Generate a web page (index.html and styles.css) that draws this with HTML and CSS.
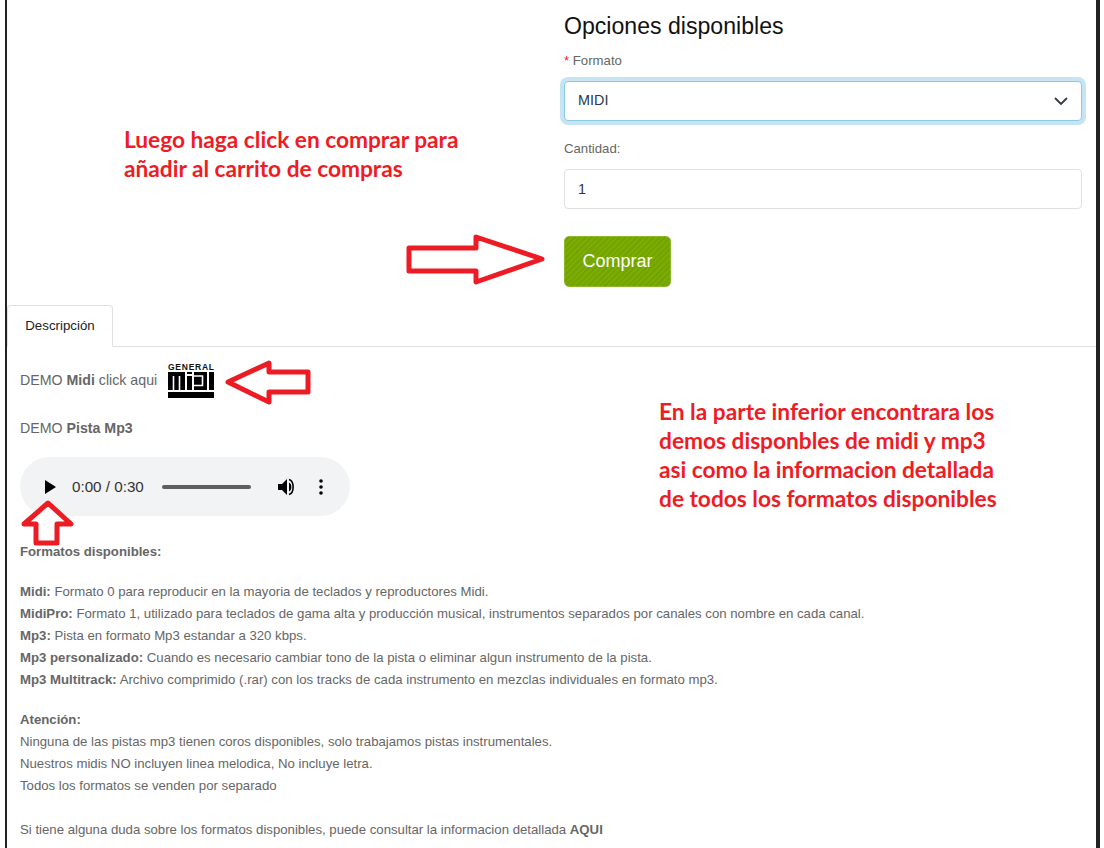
FILE: index.html
```html
<!DOCTYPE html>
<html lang="es">
<head>
    <meta charset="UTF-8">
    <meta name="viewport" content="width=device-width, initial-scale=1.0">
    <title>Opciones disponibles</title>
    <link rel="stylesheet" href="styles.css">
</head>
<body>
    <div class="frame">
        <div class="options">
            <h2>Opciones disponibles</h2>
            <div class="form-group">
                <label for="formato"><span class="required">*</span> Formato</label>
                <div class="select-wrap">
                    <select id="formato">
                        <option>MIDI</option>
                        <option>MidiPro</option>
                        <option>Mp3</option>
                    </select>
                    <svg class="chevron" width="16" height="10" viewBox="0 0 16 10"><path d="M2 2l6 6 6-6" fill="none" stroke="#343a40" stroke-width="1.800"/></svg>
                </div>
            </div>
            <div class="form-group qty">
                <label for="cantidad">Cantidad:</label>
                <input type="text" id="cantidad" value="1">
            </div>
            <button class="buy">Comprar</button>
        </div>

        <div class="tabs">
            <a class="tab">Descripción</a>
        </div>

        <div class="description">
            <div class="demo-midi">
                <p>DEMO <b>Midi</b> click aqui</p>
                <svg class="midi-logo" width="46" height="35" viewBox="0 0 46 35">
                    <text x="0" y="6.500" textLength="46" class="midi-word">GENERAL</text>
                    <path d="M0 9h17v18H0zM19 13h5v14h-5zM19 9h5v2h-5zM26 9h13v18H26zM41 9h5v18h-5z" fill="#000"/>
                    <path d="M5.500 13v14M11.500 13v14M26 13h8.500v9.500H26" fill="none" stroke="#fff" stroke-width="1.600"/>
                    <path d="M0 29h46v6H0z" fill="#000"/>
                </svg>
            </div>
            <p class="demo-mp3">DEMO <b>Pista Mp3</b></p>

            <div class="player">
                <svg class="play" width="12" height="14" viewBox="0 0 12 14"><path d="M1 0v14l11-7z" fill="#000"/></svg>
                <span class="time">0:00 / 0:30</span>
                <span class="track"></span>
                <svg class="volume" width="18" height="18" viewBox="0 0 18 18"><path d="M0 6v6h4l5 5V1L4 6z" fill="#000"/><path d="M11 4.500c3.200 1.200 3.200 7.800 0 9z" fill="#000"/><path d="M11 1.500c5.500 1.500 5.500 13.500 0 15" fill="none" stroke="#000" stroke-width="1.600"/></svg>
                <svg class="more" width="4" height="16" viewBox="0 0 4 16"><circle cx="2" cy="2" r="1.800"/><circle cx="2" cy="8" r="1.800"/><circle cx="2" cy="14" r="1.800"/></svg>
            </div>

            <p class="lead"><b>Formatos disponibles:</b></p>
            <div class="block">
                <p><b>Midi:</b> Formato 0 para reproducir en la mayoria de teclados y reproductores Midi.</p>
                <p><b>MidiPro:</b> Formato 1, utilizado para teclados de gama alta y producción musical, instrumentos separados por canales con nombre en cada canal.</p>
                <p><b>Mp3:</b> Pista en formato Mp3 estandar a 320 kbps.</p>
                <p><b>Mp3 personalizado:</b> Cuando es necesario cambiar tono de la pista o eliminar algun instrumento de la pista.</p>
                <p><b>Mp3 Multitrack:</b> Archivo comprimido (.rar) con los tracks de cada instrumento en mezclas individuales en formato mp3.</p>
            </div>
            <div class="block">
                <p><b>Atención:</b></p>
                <p>Ninguna de las pistas mp3 tienen coros disponibles, solo trabajamos pistas instrumentales.</p>
                <p>Nuestros midis NO incluyen linea melodica, No incluye letra.</p>
                <p>Todos los formatos se venden por separado</p>
            </div>
            <p class="last">Si tiene alguna duda sobre los formatos disponibles, puede consultar la informacion detallada <b>AQUI</b></p>
        </div>

        <!-- anotaciones en rojo sobre la captura -->
        <div class="note note-buy">Luego haga click en comprar para<br>añadir al carrito de compras</div>
        <div class="note note-demo">En la parte inferior encontrara los<br>demos disponbles de midi y mp3<br>asi como la informacion detallada<br>de todos los formatos disponibles</div>

        <svg class="arrow arrow-right" width="146" height="56" viewBox="0 0 146 56"><path d="M5 15h67V4l66 22-66 23V38H5z"/></svg>
        <svg class="arrow arrow-left" width="96" height="50" viewBox="0 0 96 50"><path d="M5 24L46 5v9h39v20H46v10z"/></svg>
        <svg class="arrow arrow-up" width="56" height="50" viewBox="0 0 56 50"><path d="M28 4l23 21H37v19H16V25H4z"/></svg>
    </div>
</body>
</html>
```

FILE: styles.css
```css
* {
    box-sizing: border-box;
}

body {
    margin: 0;
    font-family: 'Liberation Sans', Arial, sans-serif;
    background-color: #fff;
    color: #666;
}

.frame {
    position: relative;
    width: 1095px;
    height: 848px;
    margin-left: 5px;
    border-left: 2px solid #222;
    border-right: 4px solid #222;
    overflow: hidden;
}

.options {
    width: 518px;
    margin-left: 557px;
    padding-top: 13px;
}

h2 {
    margin: 0 0 14px;
    font-size: 23.100px;
    line-height: 26px;
    font-weight: 400;
    color: #111;
}

label {
    display: block;
    font-size: 13.200px;
    line-height: 16px;
    margin-bottom: 12px;
    color: #666;
}

.required {
    color: #e22;
}

.form-group {
    margin-bottom: 20px;
}

.qty {
    margin-bottom: 27px;
}

.select-wrap {
    position: relative;
}

select, input {
    display: block;
    width: 100%;
    padding: 0 13px;
    font-family: inherit;
    font-size: 14.400px;
    color: #2a3a4a;
    background-color: #fff;
    border: 1px solid #e0e0e0;
    border-radius: 4px;
    outline: none;
}

select {
    height: 40px;
    padding-bottom: 2px;
    appearance: none;
    border-color: #8ccbe6;
    box-shadow: 0 0 0 4px #c6e4f1;
}

input {
    height: 40px;
}

.chevron {
    position: absolute;
    right: 13px;
    top: 15px;
}

.buy {
    display: block;
    width: 107px;
    height: 51px;
    padding: 0;
    font-family: inherit;
    font-size: 18px;
    color: #fff;
    border: 1px solid #8cb92a;
    border-radius: 5px;
    background: repeating-linear-gradient(135deg, #7bac00 0, #7bac00 2px, #72a300 2px, #72a300 4px);
}

.tabs {
    margin-top: 18px;
    height: 42px;
    border-bottom: 1px solid #e0e0e0;
}

.tab {
    display: block;
    width: 106px;
    height: 42px;
    font-size: 13.300px;
    line-height: 39px;
    text-align: center;
    color: #222;
    background-color: #fff;
    border: 1px solid #e0e0e0;
    border-bottom-color: #fff;
    border-radius: 4px 4px 0 0;
}

.description {
    padding-left: 13px;
    font-size: 13.200px;
    line-height: 22px;
}

.description p {
    margin: 0;
}

.description b {
    color: #666;
}

.demo-midi {
    display: flex;
    align-items: center;
    height: 35px;
    margin-top: 16px;
    font-size: 14.200px;
}

.demo-midi p {
    position: relative;
    top: -1px;
}

.midi-logo {
    margin-left: 11px;
}

.midi-word {
    font-size: 8.500px;
    font-weight: 700;
    font-family: 'Liberation Sans', Arial, sans-serif;
    fill: #111;
}

.description .demo-mp3 {
    margin-top: 19px;
    font-size: 14.200px;
}

.player {
    display: flex;
    align-items: center;
    width: 330px;
    height: 59px;
    margin-top: 18px;
    padding-left: 24px;
    background-color: #f1f3f4;
    border-radius: 30px;
    color: #333;
}

.time {
    margin-left: 16px;
    font-size: 15.200px;
}

.track {
    width: 89px;
    height: 4px;
    margin-left: 18px;
    background-color: #5e5e5e;
    border-radius: 2px;
}

.volume {
    margin-left: 27px;
}

.more {
    margin-left: 23px;
}

.description .lead {
    margin-top: 25px;
}

.block {
    margin-top: 18px;
}

.description .last {
    margin-top: 22px;
}

.note {
    position: absolute;
    font-family: Lato, sans-serif;
    font-weight: 700;
    font-size: 22.700px;
    line-height: 29px;
    color: #ee1c25;
    white-space: nowrap;
}

.note-buy {
    left: 117px;
    top: 125px;
}

.note-demo {
    left: 652px;
    top: 397px;
}

.arrow {
    position: absolute;
}

.arrow path {
    fill: #fff;
    stroke: #ed1c24;
    stroke-width: 5;
    stroke-linejoin: round;
}

.arrow-right {
    left: 397px;
    top: 233px;
}

.arrow-left {
    left: 216px;
    top: 358px;
}

.arrow-up {
    left: 13px;
    top: 499px;
}
```
